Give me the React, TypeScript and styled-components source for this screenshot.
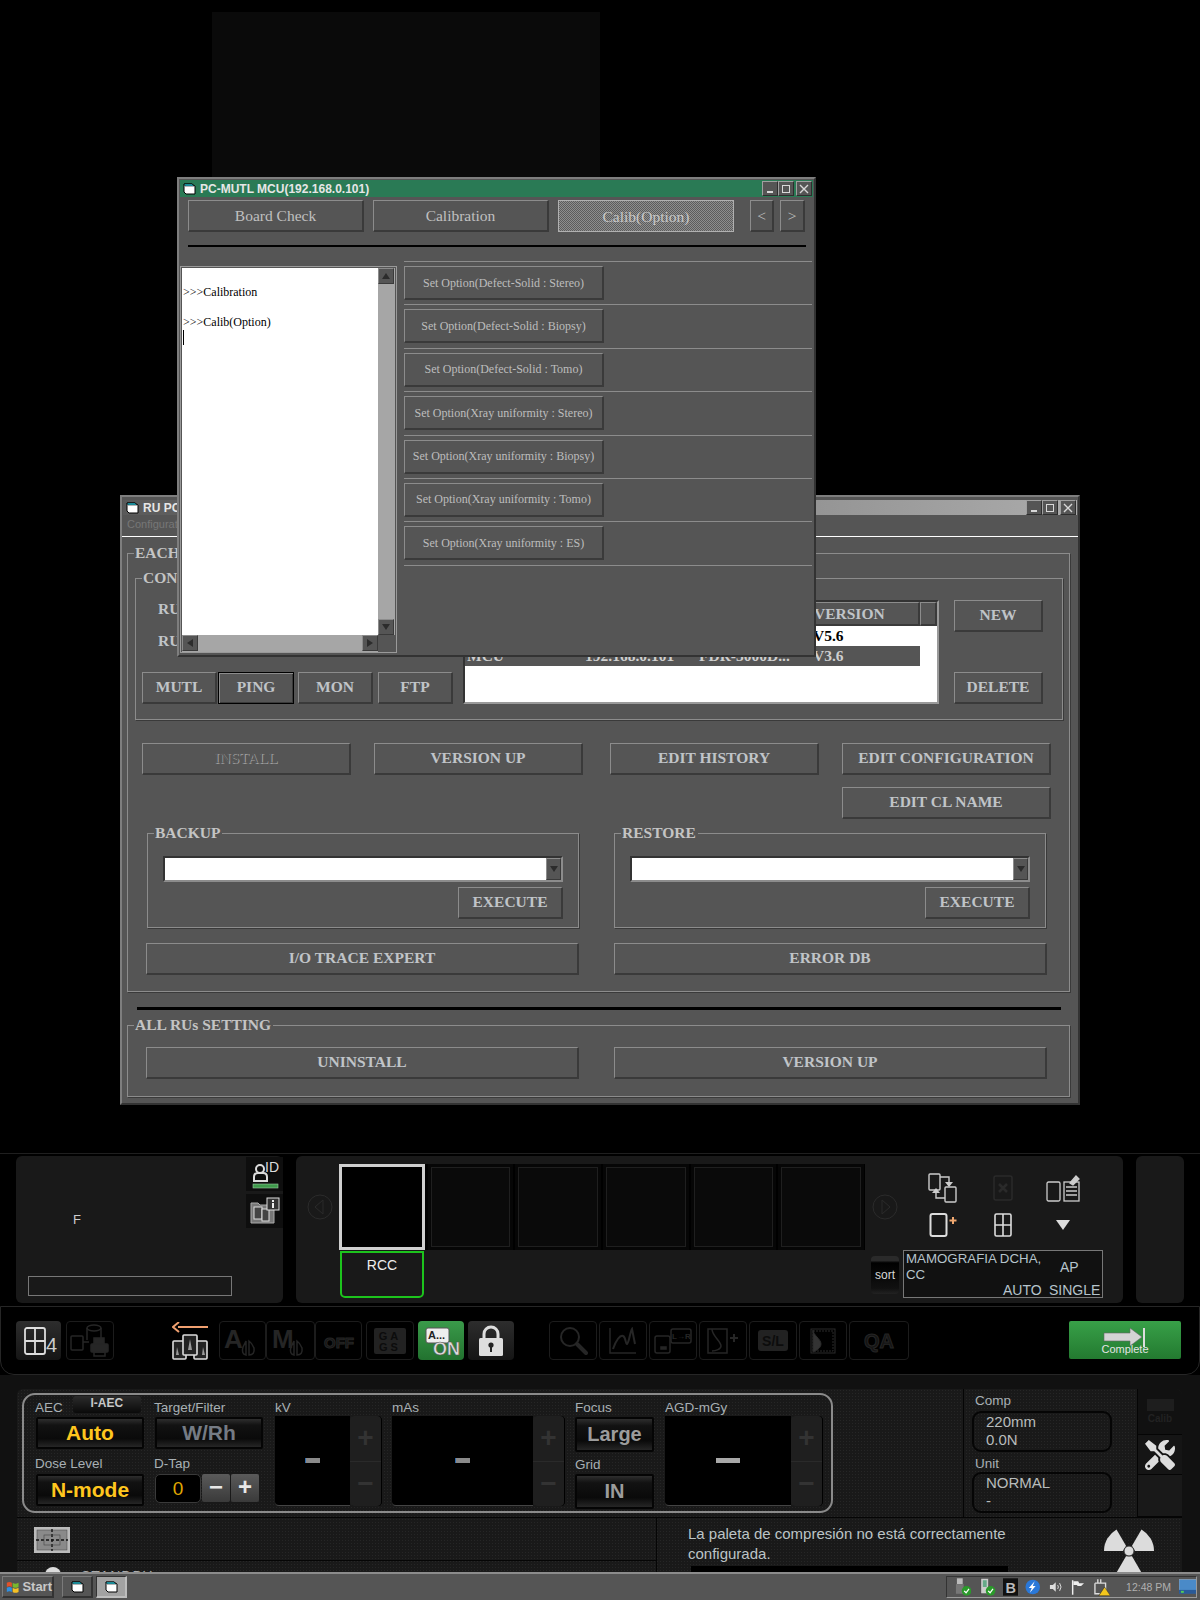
import * as React from 'react';
import styled, { createGlobalStyle, css } from 'styled-components';
import { FaTools } from 'react-icons/fa';

const GlobalStyle = createGlobalStyle`
  html, body { margin: 0; padding: 0; background: #000; }
  * { box-sizing: border-box; }
`;

const serif = `"Liberation Serif", "Times New Roman", serif`;
const sans = `"Liberation Sans", Arial, sans-serif`;

const bevel = css`
  background-color: #555;
  border-style: solid;
  border-width: 1px 2px 2px 1px;
  border-color: #8c8c8c #3a3a3a #3a3a3a #8c8c8c;
`;

const Page = styled.div`
  width: 1200px;
  height: 1600px;
  background: #000;
  display: flex;
  flex-direction: column;
  overflow: hidden;
  font-family: ${sans};
`;

/* ---------- desktop with the two floating windows ---------- */
const Desktop = styled.div`
  height: 1153px;
  flex: none;
  position: relative;
`;
const GhostWindow = styled.div`
  position: absolute;
  left: 212px;
  top: 12px;
  width: 388px;
  height: 170px;
  background: #0a0a0a;
`;
const Win = styled.div<{ $x: number; $y: number; $w: number; $h: number }>`
  position: absolute;
  left: ${({ $x }) => $x}px;
  top: ${({ $y }) => $y}px;
  width: ${({ $w }) => $w}px;
  height: ${({ $h }) => $h}px;
  background: #555;
  border: 2px solid;
  border-color: #7e7e7e #333 #333 #7e7e7e;
  display: flex;
  flex-direction: column;
`;
const TitleBar = styled.div<{ $active?: boolean }>`
  height: ${({ $active }) => ($active ? 17 : 15)}px;
  flex: none;
  margin: ${({ $active }) => ($active ? 1 : 3)}px 1px 0 1px;
  padding: 0 1px 0 3px;
  display: flex;
  align-items: center;
  gap: 4px;
  background: ${({ $active }) => ($active ? '#2a7a55' : 'linear-gradient(90deg, #5a5a5a, #ababab)')};
`;
const TitleText = styled.span`
  font: bold 12px ${sans};
  color: #e6e6e6;
  white-space: nowrap;
  flex: 1;
`;
const CaptionBtn = styled.span<{ $gap?: boolean }>`
  width: 16px;
  height: 15px;
  ${bevel};
  border-width: 1px;
  border-color: #a0a0a0 #2e2e2e #2e2e2e #a0a0a0;
  display: flex;
  align-items: center;
  justify-content: center;
  ${({ $gap }) => $gap && 'margin-left: 2px;'}
`;
const CaptionGroup = styled.div`
  display: flex;
`;

const TabRow = styled.div`
  display: flex;
  gap: 9px;
  margin: 3px 0 0 9px;
`;
const Tab = styled.div<{ $on?: boolean; $w?: number }>`
  width: ${({ $w }) => $w ?? 176}px;
  height: 32px;
  ${bevel};
  font: 15.5px ${serif};
  color: #c0c0c0;
  display: flex;
  align-items: center;
  justify-content: center;
  ${({ $on }) =>
    $on &&
    css`
      border: 1px solid #b0b0b0;
      color: #c8c8c8;
      padding-top: 1px;
      background: repeating-conic-gradient(#8e8e8e 0 25%, #5c5c5c 0 50%) 0 0 / 2px 2px;
    `}
`;
const ArrowTabs = styled.div`
  display: flex;
  gap: 6px;
  margin-left: 7px;
`;
const Rule = styled.div`
  height: 2px;
  margin: 13px 8px 0 9px;
  background: #000;
`;
const McuBody = styled.div`
  display: flex;
  margin-top: 14px;
`;
const LogFrame = styled.div`
  margin: 5px 0 0 1px;
  width: 217px;
  height: 387px;
  border: 1px solid #9a9a9a;
  padding: 1px;
  display: grid;
  grid-template-columns: 196px 17px;
  grid-template-rows: 367px 17px;
`;
const LogText = styled.div`
  background: #fff;
  padding: 2px 0 0 1px;
  font: 12px/15px ${serif};
  color: #000;
  white-space: pre;
`;
const Caret = styled.div`
  width: 1px;
  height: 15px;
  background: #000;
`;
const ScrollTrack = styled.div<{ $row?: boolean }>`
  background: #a6a6a6;
  display: flex;
  flex-direction: ${({ $row }) => ($row ? 'row' : 'column')};
  justify-content: space-between;
`;
const ScrollBtn = styled.span`
  width: 16px;
  height: 16px;
  flex: none;
  ${bevel};
  border-width: 1px;
  display: flex;
  align-items: center;
  justify-content: center;
`;
const OptionList = styled.div`
  width: 408px;
  margin-left: 7px;
  border-bottom: 1px solid #8c8c8c;
  height: 305px;
`;
const OptionRow = styled.div`
  height: 43.4px;
  border-top: 1px solid #8c8c8c;
  padding-top: 4px;
`;
const OptionBtn = styled.div`
  width: 200px;
  height: 34px;
  ${bevel};
  padding-top: 1px;
  font: 12px ${serif};
  color: #bdbdbd;
  display: flex;
  align-items: center;
  justify-content: center;
  white-space: nowrap;
`;

/* ---------- RU window ---------- */
const MenuBar = styled.div`
  height: 21px;
  flex: none;
  padding: 3px 0 0 5px;
  font: 11px ${sans};
  color: #777;
`;
const WhiteRule = styled.div`
  height: 1px;
  flex: none;
  background: #fff;
`;
const Group = styled.div<{ $ml: number; $mt: number; $h: number; $w: number }>`
  position: relative;
  margin: ${({ $mt }) => $mt}px 0 0 ${({ $ml }) => $ml}px;
  height: ${({ $h }) => $h}px;
  width: ${({ $w }) => $w}px;
  flex: none;
  border: 1px solid #8c8c8c;
  box-shadow: 1px 1px 0 #3a3a3a;
`;
const Legend = styled.span`
  position: absolute;
  left: 6px;
  top: -11px;
  padding: 0 2px 0 1px;
  background: #555;
  font: bold 15.5px/20px ${serif};
  color: #c4c4c4;
  white-space: nowrap;
`;
const BoldBtn = styled.div<{ $w: number; $ml?: number; $dead?: boolean; $focus?: boolean }>`
  width: ${({ $w }) => $w}px;
  height: 32px;
  flex: none;
  margin-left: ${({ $ml }) => $ml ?? 0}px;
  ${bevel};
  padding-bottom: 2px;
  font: bold 15.5px ${serif};
  color: #c0c4c8;
  display: flex;
  align-items: center;
  justify-content: center;
  white-space: nowrap;
  ${({ $dead }) => $dead && 'color: #585858; text-shadow: 1px 1px 0 #a0a0a0; font-weight: normal;'}
  ${({ $focus }) => $focus && 'border: 1px solid #000; box-shadow: inset 1px 1px 0 #8c8c8c, inset -1px -1px 0 #3a3a3a;'}
`;
const ConBody = styled.div`
  height: 100%;
  padding: 0 20px 15px 6px;
  display: flex;
  align-items: flex-end;
`;
const ConLeft = styled.div`
  width: 311px;
  flex: none;
`;
const RuLabel = styled.div`
  font: bold 15.5px/32px ${serif};
  color: #c0c4c8;
  padding-left: 16px;
`;
const RuButtons = styled.div`
  display: flex;
  margin-top: 15px;
`;
const ListBox = styled.div`
  width: 476px;
  height: 104px;
  margin-left: 10px;
  background: #fff;
  border: 2px solid;
  border-color: #333 #9a9a9a #9a9a9a #333;
  display: flex;
  flex-direction: column;
`;
const ListHead = styled.div`
  display: grid;
  grid-template-columns: 118px 114px 114px 109px 17px;
  height: 24px;
  flex: none;
`;
const HeadCell = styled.div`
  ${bevel};
  font: bold 15.5px/21px ${serif};
  color: #c0c4c8;
  padding-left: 2px;
  overflow: hidden;
`;
const ListRow = styled.div<{ $sel?: boolean }>`
  display: grid;
  grid-template-columns: 118px 114px 114px 109px;
  width: 455px;
  height: 20px;
  flex: none;
  font: bold 15.5px/20px ${serif};
  color: ${({ $sel }) => ($sel ? '#cfcfcf' : '#000')};
  background: ${({ $sel }) => ($sel ? '#555' : 'transparent')};
  white-space: nowrap;
  & > span { padding-left: 2px; overflow: hidden; }
`;
const ConSide = styled.div`
  height: 104px;
  margin-left: 15px;
  display: flex;
  flex-direction: column;
  justify-content: space-between;
`;
const ActionGrid = styled.div`
  margin: 23px 0 0 14px;
  display: grid;
  grid-template-columns: 232px 236px 232px 209px;
  row-gap: 12px;
`;
const SecondLine = styled.div`
  grid-column: 4;
`;
const TwoCols = styled.div<{ $mt: number; $ml: number }>`
  display: flex;
  gap: 35px;
  margin: ${({ $mt }) => $mt}px 0 0 ${({ $ml }) => $ml}px;
`;
const GroupBox = styled.div`
  position: relative;
  width: 432px;
  height: 95px;
  border: 1px solid #8c8c8c;
  box-shadow: 1px 1px 0 #3a3a3a;
  padding: 22px 15px 0 15px;
  display: flex;
  flex-direction: column;
  align-items: flex-end;
`;
const Combo = styled.div`
  width: 400px;
  height: 26px;
  flex: none;
  background: #fff;
  border: 2px solid;
  border-color: #333 #8c8c8c #8c8c8c #333;
  display: flex;
  justify-content: flex-end;
`;
const ComboBtn = styled.span`
  width: 15px;
  ${bevel};
  border-width: 1px;
  display: flex;
  align-items: center;
  justify-content: center;
`;
const ExecuteWrap = styled.div`
  margin-top: 5px;
`;
const ThickRule = styled.div`
  height: 3px;
  margin: 15px 17px 0 15px;
  background: #000;
  flex: none;
`;

/* ---------- thumbnails strip ---------- */
const StripSection = styled.div`
  height: 153px;
  flex: none;
  border-top: 1px solid #1f1f1f;
  padding: 2px 0 0 16px;
  display: flex;
`;
const Panel = styled.div<{ $w: number; $ml?: number }>`
  width: ${({ $w }) => $w}px;
  height: 147px;
  margin-left: ${({ $ml }) => $ml ?? 0}px;
  background: #191919;
  border-radius: 6px;
`;
const PatientPanel = styled(Panel)`
  display: flex;
`;
const PatientInfo = styled.div`
  flex: 1;
  display: flex;
  flex-direction: column;
  padding: 57px 0 7px 12px;
`;
const PatientSex = styled.div`
  font: 13px/14px ${sans};
  color: #ccc;
  margin-left: 45px;
`;
const PatientBar = styled.div`
  margin-top: auto;
  width: 204px;
  height: 20px;
  border: 1px solid #777;
`;
const SideTools = styled.div`
  width: 37px;
  display: flex;
  flex-direction: column;
  gap: 3px;
  padding-top: 1px;
`;
const SideTool = styled.div`
  height: 34px;
  background: #0e0e0e;
  display: flex;
  align-items: center;
  justify-content: center;
`;
const StudyPanel = styled(Panel)`
  display: flex;
  flex-direction: column;
  padding-top: 8px;
`;
const ThumbRow = styled.div`
  display: flex;
  height: 86px;
  flex: none;
`;
const NavCell = styled.div<{ $w: number }>`
  width: ${({ $w }) => $w}px;
  display: flex;
  align-items: center;
  justify-content: center;
`;
const Thumbs = styled.div`
  width: 526px;
  margin-left: -4px;
  background: #000;
  display: grid;
  grid-template-columns: repeat(6, 1fr);
`;
const Thumb = styled.div<{ $on?: boolean }>`
  ${({ $on }) =>
    $on
      ? 'border: 3px solid #cfcfcf; background: #000; margin-right: 2px;'
      : 'margin: 0 1px; background: #0a0a0a; box-shadow: inset 0 0 0 3px #060606, inset 0 0 0 4px #1f1f1f;'}
`;
const ToolGrid = styled.div`
  margin: 5px 0 0 8px;
  display: grid;
  grid-template-columns: repeat(3, 60px);
  grid-auto-rows: 37px;
  align-items: center;
  justify-items: center;
`;
const StudyRow = styled.div`
  display: flex;
  padding-left: 44px;
  align-items: flex-start;
`;
const ViewTag = styled.div`
  width: 84px;
  height: 47px;
  margin-top: 1px;
  border: 2px solid #1dc41d;
  border-radius: 0 0 5px 5px;
  font: 14px/16px ${sans};
  color: #eee;
  text-align: center;
  padding-top: 4px;
`;
const SortBtn = styled.div`
  width: 28px;
  height: 38px;
  margin: 6px 0 0 447px;
  border-radius: 4px;
  background: linear-gradient(#2a2a2a 0, #2a2a2a 12%, #000 18%, #111 85%, #222 100%);
  font: 12px/38px ${sans};
  color: #d8d8d8;
  text-align: center;
`;
const ProcInfo = styled.div`
  width: 200px;
  height: 48px;
  margin-left: 4px;
  padding-left: 2px;
  border: 1px solid #777;
  background: #111;
  font: 14px/16px ${sans};
  color: #b6c4cc;
  display: grid;
  grid-template-columns: 97px 46px 1fr;
  grid-template-rows: 31px 15px;
  white-space: nowrap;
`;
const ProcName = styled.div`
  grid-column: 1 / span 2;
  font-size: 13.3px;
`;
const ProcCell = styled.div<{ $pl?: number; $col?: number; $mt?: number }>`
  ${({ $col }) => $col && `grid-column: ${$col};`}
  padding-left: ${({ $pl }) => $pl ?? 0}px;
  margin-top: ${({ $mt }) => $mt ?? 0}px;
`;

/* ---------- toolbar ---------- */
const Toolbar = styled.div`
  height: 69px;
  flex: none;
  border: 1px solid #262626;
  border-radius: 0 0 14px 14px;
  padding: 14px 18px 0 15px;
  display: flex;
  align-items: flex-start;
`;
const ToolSet = styled.div<{ $ml?: number; $gap?: number }>`
  display: flex;
  margin-left: ${({ $ml }) => $ml ?? 0}px;
  gap: ${({ $gap }) => $gap ?? 0}px;
`;
const ToolBtn = styled.div<{ $w?: number; $kind?: 'dim' | 'dark' | 'green' | 'bare' }>`
  width: ${({ $w }) => $w ?? 48}px;
  height: 39px;
  border-radius: 4px;
  display: flex;
  align-items: center;
  justify-content: center;
  ${({ $kind }) => {
    if ($kind === 'dark') return 'background: linear-gradient(#2d2d2d, #151515);';
    if ($kind === 'green') return 'background: linear-gradient(#3a9a4a, #22722f);';
    if ($kind === 'bare') return '';
    return 'border: 1px solid #1c1c1c;';
  }}
`;
const CompleteBtn = styled.div`
  width: 112px;
  height: 38px;
  margin-left: auto;
  border-radius: 2px;
  background: linear-gradient(#38a048, #237a30);
  display: flex;
  flex-direction: column;
  align-items: center;
  padding-top: 6px;
`;
const CompleteLabel = styled.span`
  font: 11px/12px ${sans};
  color: #e4e4e4;
  margin-top: -6px;
`;

/* ---------- exposure panel ---------- */
const ExposureSection = styled.div`
  height: 197px;
  flex: none;
  background: #111;
  padding: 14px 18px 0 17px;
`;
const ExposurePanel = styled.div`
  height: 183px;
  overflow: hidden;
  border-radius: 6px 6px 0 0;
  background-color: #191919;
  background-image: radial-gradient(#262626 0.8px, transparent 0.8px);
  background-size: 3px 3px;
`;
const UpperRow = styled.div`
  height: 129px;
  display: flex;
  border-bottom: 1px solid #050505;
`;
const ParamGroup = styled.div`
  width: 811px;
  height: 120px;
  flex: none;
  margin: 4px 0 0 5px;
  border: 2px solid #8a8a8a;
  border-radius: 13px;
  padding-left: 12px;
  display: flex;
  gap: 11px;
`;
const ParamCol = styled.div<{ $w: number; $ml?: number }>`
  width: ${({ $w }) => $w}px;
  margin-left: ${({ $ml }) => $ml ?? 0}px;
  flex: none;
`;
const ParamLabel = styled.div<{ $h?: number }>`
  height: ${({ $h }) => $h ?? 22}px;
  font: 13.5px/${({ $h }) => ($h ?? 22) + 4}px ${sans};
  color: #a8b0b4;
  display: flex;
  align-items: flex-start;
  white-space: nowrap;
`;
const LeadLabel = styled(ParamLabel)`
  margin-left: -1px;
`;
const TinyBtn = styled.span`
  width: 68px;
  height: 17px;
  margin: 1px 0 0 10px;
  border-radius: 3px;
  background: linear-gradient(#2c2c2c, #0a0a0a);
  font: bold 12px/15px ${sans};
  color: #c8c8c8;
  text-align: center;
`;
const SelectBtn = styled.div<{ $tone: 'gold' | 'grey' | 'light'; $h?: number }>`
  height: ${({ $h }) => $h ?? 32}px;
  border: 2px solid #050505;
  border-radius: 2px;
  background: linear-gradient(#2e2e2e 0, #121212 22%, #0a0a0a 70%, #262626 100%);
  font: bold ${({ $tone }) => ($tone === 'light' ? 20 : 21)}px/${({ $h }) => ($h ?? 32) - 5}px ${sans};
  text-align: center;
  color: ${({ $tone }) => ($tone === 'gold' ? '#ffc61e' : $tone === 'grey' ? '#757b84' : '#9c9c9c')};
`;
const TapRow = styled.div`
  display: flex;
  gap: 1px;
`;
const TapValue = styled.div`
  width: 46px;
  height: 29px;
  background: #000;
  border: 1px solid #3a3a3a;
  border-radius: 5px;
  font: 19px/27px ${sans};
  color: #e0a800;
  text-align: center;
`;
const TapBtn = styled.div`
  width: 28px;
  height: 28px;
  border-radius: 2px;
  background: linear-gradient(#5a5a5a, #3a3a3a);
  font: bold 24px/26px ${sans};
  color: #e8e8e8;
  text-align: center;
`;
const Display = styled.div`
  display: flex;
  height: 90px;
  margin-top: -1px;
`;
const DisplayFace = styled.div`
  flex: 1;
  background: #000;
  border-bottom: 1px solid #444;
  border-radius: 0 0 0 4px;
  display: flex;
  align-items: center;
  justify-content: center;
`;
const Dash = styled.span<{ $w: number; $big?: boolean }>`
  width: ${({ $w }) => $w}px;
  height: 5px;
  background: ${({ $big }) => ($big ? '#a8a8a8' : '#8a8a8a')};
  ${({ $big }) => !$big && 'border-left: 1px solid #2a6ab0;'}
`;
const Stepper = styled.div`
  width: 31px;
  border-radius: 4px;
  background: #1f1f1f;
  display: grid;
  grid-template-rows: 1fr 1fr;
  box-shadow: 1px 0 0 #000;
`;
const StepCell = styled.div`
  font: bold 28px/44px ${sans};
  color: #333;
  text-align: center;
  & + & { border-top: 1px solid #2a2a2a; }
`;
const CompCol = styled.div`
  width: 174px;
  flex: none;
  margin-left: 130px;
  border-left: 1px solid #050505;
  padding: 0 0 0 8px;
`;
const CompLabel = styled.div<{ $h: number }>`
  height: ${({ $h }) => $h}px;
  padding-left: 3px;
  font: 13.5px/24px ${sans};
  color: #a8b0b4;
`;
const CompBox = styled.div`
  width: 140px;
  height: 41px;
  border: 2px solid #050505;
  border-radius: 9px;
  padding: 0 0 0 12px;
  font: 15px/18px ${sans};
  color: #b8bcbc;
`;
const SideCells = styled.div`
  width: 45px;
  display: flex;
  flex-direction: column;
`;
const SideCell = styled.div<{ $h: number; $bg?: string }>`
  height: ${({ $h }) => $h}px;
  border-bottom: 1px solid #050505;
  border-left: 1px solid #050505;
  background: ${({ $bg }) => $bg ?? '#171717'};
  display: flex;
  flex-direction: column;
  align-items: center;
  justify-content: center;
  color: #ddd;
`;
const CalibLamp = styled.span`
  width: 27px;
  height: 12px;
  background: #1e1e1e;
`;
const CalibText = styled.span`
  font: bold 10px/12px ${sans};
  color: #222;
  margin-top: 2px;
`;
const LowerRow = styled.div`
  display: flex;
  height: 54px;
`;
const LowerLeft = styled.div`
  width: 640px;
  flex: none;
  border-right: 1px solid #050505;
`;
const FrameCell = styled.div`
  height: 43px;
  padding: 9px 0 0 17px;
  border-bottom: 1px solid #050505;
`;
const StatusLine = styled.div`
  display: flex;
  align-items: flex-start;
  padding: 6px 0 0 28px;
  gap: 20px;
`;
const StatusDot = styled.span`
  width: 16px;
  height: 16px;
  border-radius: 50%;
  background: #ddd;
`;
const StatusText = styled.span`
  margin-top: 2px;
  font: 14px/14px ${sans};
  color: #aaa;
  letter-spacing: 1px;
`;
const LowerRight = styled.div`
  flex: 1;
  display: flex;
  padding-left: 31px;
`;
const Message = styled.div`
  width: 370px;
  padding-top: 6px;
  font: 15px/20px ${sans};
  color: #bcc4c6;
`;
const MessageBar = styled.div`
  width: 317px;
  height: 8px;
  margin: 2px 0 0 3px;
  background: #000;
`;
const Trefoil = styled.div`
  margin: 9px 0 0 45px;
`;

/* ---------- taskbar ---------- */
const Taskbar = styled.div`
  height: 28px;
  flex: none;
  background: #555;
  border-top: 2px solid #8c8c8c;
  padding: 2px 3px 0 2px;
  display: flex;
  align-items: flex-start;
`;
const StartBtn = styled.div`
  width: 52px;
  height: 22px;
  ${bevel};
  border-color: #7a7a7a #333 #333 #7a7a7a;
  display: flex;
  align-items: center;
  padding-left: 3px;
  gap: 3px;
  font: bold 13px ${sans};
  color: #c8c8c8;
`;
const TaskBtn = styled.div<{ $on?: boolean; $ml: number }>`
  width: 31px;
  height: 22px;
  margin-left: ${({ $ml }) => $ml}px;
  ${bevel};
  border-color: #7a7a7a #333 #333 #7a7a7a;
  display: flex;
  align-items: center;
  padding-left: 8px;
  ${({ $on }) => $on && 'background: #a2a2a2; border-color: #333 #bdbdbd #bdbdbd #333;'}
`;
const Tray = styled.div`
  width: 251px;
  height: 22px;
  margin-left: auto;
  border: 1px solid;
  border-color: #333 #9a9a9a #9a9a9a #333;
  padding-left: 7px;
  display: flex;
  align-items: center;
  gap: 7px;
`;
const Clock = styled.span`
  margin-left: 9px;
  font: 10.5px ${sans};
  color: #b0b0b0;
  white-space: nowrap;
  width: 47px;
`;

/* ---------- drawn glyphs ---------- */
const DocIcon = () => (
  <svg width="13" height="13" viewBox="0 0 13 13">
    <path d="M1 2h8l3 2v8H3L1 10z" fill="#fff" stroke="#000" />
    <path d="M1 2h8l2 2H2z" fill="#27c5d8" stroke="#000" strokeWidth="0.6" />
  </svg>
);
const MinGlyph = () => (
  <svg width="10" height="10"><rect x="2" y="7" width="6" height="2" fill="#d8d8d8" /></svg>
);
const MaxGlyph = () => (
  <svg width="10" height="10"><rect x="1.5" y="1.5" width="7" height="7" fill="none" stroke="#d8d8d8" /></svg>
);
const CloseGlyph = () => (
  <svg width="10" height="10"><path d="M1 1l8 8M9 1l-8 8" stroke="#d8d8d8" strokeWidth="1.4" /></svg>
);
const Caption = () => (
  <CaptionGroup>
    <CaptionBtn><MinGlyph /></CaptionBtn>
    <CaptionBtn><MaxGlyph /></CaptionBtn>
    <CaptionBtn $gap><CloseGlyph /></CaptionBtn>
  </CaptionGroup>
);
const Tri = ({ dir }: { dir: 'up' | 'down' | 'left' | 'right' }) => {
  const pts = { up: '4,1 8,7 0,7', down: '0,1 8,1 4,7', left: '7,0 7,8 1,4', right: '1,0 1,8 7,4' }[dir];
  return (
    <svg width="8" height="8"><polygon points={pts} fill="#2c2c2c" /></svg>
  );
};
const NavCircle = ({ right }: { right?: boolean }) => (
  <svg width="26" height="26" viewBox="0 0 26 26">
    <circle cx="13" cy="13" r="12" fill="none" stroke="#2b2b2b" />
    <polygon points={right ? '10,6 18,13 10,20' : '16,6 8,13 16,20'} fill="none" stroke="#2b2b2b" />
  </svg>
);
const PatientIdIcon = () => (
  <svg width="30" height="30" viewBox="0 0 30 30">
    <circle cx="10" cy="10" r="4" fill="none" stroke="#ddd" strokeWidth="2" />
    <path d="M4 22v-4q0-4 4-4h5q4 0 4 4v4z" fill="none" stroke="#ddd" strokeWidth="2" />
    <text x="15" y="13" fontSize="14" fontFamily="Liberation Sans" fill="#ddd">ID</text>
    <rect x="3" y="25" width="25" height="4" fill="#3f9a4c" stroke="#9ac8a0" strokeWidth="0.6" />
  </svg>
);
const FolderInfoIcon = () => (
  <svg width="30" height="28" viewBox="0 0 30 28">
    <path d="M1 6h7l2 2h14v18H1z" fill="#777" stroke="#aaa" />
    <rect x="4" y="10" width="8" height="12" fill="#444" stroke="#ddd" />
    <rect x="12" y="12" width="7" height="12" fill="#444" stroke="#ddd" />
    <rect x="17" y="1" width="12" height="12" fill="#333" stroke="#ddd" />
    <rect x="22" y="3" width="2" height="2" fill="#eee" />
    <rect x="22" y="6" width="2" height="5" fill="#eee" />
  </svg>
);
const SwapIcon = () => (
  <svg width="30" height="30" viewBox="0 0 30 30" fill="none" stroke="#ccc" strokeWidth="1.4">
    <rect x="1" y="1" width="11" height="16" rx="1" />
    <rect x="17" y="14" width="11" height="15" rx="1" />
    <path d="M12 4h9v6" />
    <polygon points="17,9 25,9 21,14" fill="#ccc" stroke="none" />
    <path d="M17 25H8v-5" />
    <polygon points="4,20 12,20 8,15" fill="#ccc" stroke="none" />
  </svg>
);
const DeadCardIcon = () => (
  <svg width="20" height="26" viewBox="0 0 20 26" fill="none" stroke="#2a2a2a" strokeWidth="1.5">
    <rect x="1" y="1" width="18" height="24" rx="2" />
    <path d="M6 9l8 8M14 9l-8 8" strokeWidth="2.5" />
  </svg>
);
const EditListIcon = () => (
  <svg width="34" height="28" viewBox="0 0 34 28" fill="none" stroke="#ccc" strokeWidth="1.3">
    <rect x="1" y="8" width="13" height="19" rx="1.5" />
    <rect x="18" y="8" width="15" height="19" />
    <path d="M20 13h11M20 17h11M20 21h11" />
    <path d="M24 9l6-7 3 3-6 6z" fill="#ccc" />
  </svg>
);
const AddPageIcon = () => (
  <svg width="28" height="24" viewBox="0 0 28 24" fill="none">
    <rect x="1.5" y="1" width="16" height="22" rx="2" stroke="#ddd" strokeWidth="2" />
    <path d="M24 4v7M20.5 7.5h7" stroke="#f0a870" strokeWidth="2" />
  </svg>
);
const QuadIcon = () => (
  <svg width="18" height="24" viewBox="0 0 18 24" fill="none" stroke="#ddd" strokeWidth="1.6">
    <rect x="1" y="1" width="16" height="22" rx="1.5" />
    <path d="M9 1v22M1 12h16" />
  </svg>
);
const LayoutFourIcon = () => (
  <svg width="40" height="32" viewBox="0 0 40 32">
    <g fill="none" stroke="#ddd" strokeWidth="1.8">
      <rect x="6" y="3" width="20" height="26" rx="2" />
      <path d="M16 3v26M6 16h20" />
    </g>
    <text x="27" y="27" fontSize="20" fontFamily="Liberation Sans" fill="#ccc">4</text>
  </svg>
);
const PrintFlowIcon = () => (
  <svg width="40" height="34" viewBox="0 0 40 34" fill="none" stroke="#262626" strokeWidth="1.5">
    <rect x="1" y="12" width="12" height="14" rx="1" />
    <ellipse cx="24" cy="4" rx="7" ry="3" />
    <path d="M17 4v12M31 4v12" />
    <path d="M13 18h6" />
    <rect x="24" y="14" width="10" height="6" fill="#262626" />
    <rect x="21" y="20" width="17" height="8" rx="1" fill="#262626" />
    <rect x="24" y="28" width="11" height="4" />
  </svg>
);
const MultiViewIcon = () => (
  <svg width="36" height="38" viewBox="0 0 36 38">
    <path d="M6 5h30" stroke="#f0a070" strokeWidth="2" />
    <path d="M7 0L1 5l6 5" fill="none" stroke="#f0a070" strokeWidth="2" />
    <g fill="#222" stroke="#ddd" strokeWidth="1.6">
      <rect x="1" y="19" width="13" height="18" rx="1" />
      <rect x="22" y="19" width="13" height="18" rx="1" />
      <rect x="11" y="13" width="14" height="20" rx="1" />
    </g>
    <path d="M18 17l-2 11h4zM5 25l-1 8h3zM31 25l-1 8h3z" fill="#999" />
  </svg>
);
const LetterBreastIcon = ({ letter }: { letter: string }) => (
  <svg width="44" height="34" viewBox="0 0 44 34">
    <text x="3" y="24" fontSize="26" fontWeight="bold" fontFamily="Liberation Sans" fill="#252525">{letter}</text>
    <path d="M25 31q-5-1-3-8 2-4 3-6zM28 31q6 0 5-7-2-5-5-7z" fill="none" stroke="#252525" strokeWidth="1.5" />
  </svg>
);
const OutlinedWord = ({ word, size }: { word: string; size: number }) => (
  <svg width="44" height="24" viewBox="0 0 44 24">
    <text x="22" y="19" textAnchor="middle" fontSize={size} fontWeight="bold" fontFamily="Liberation Sans" fill="#141414" stroke="#252525" strokeWidth="1">{word}</text>
  </svg>
);
const GagsIcon = () => (
  <svg width="32" height="26" viewBox="0 0 32 26">
    <rect width="32" height="26" rx="2" fill="#222" />
    <text x="16" y="12" textAnchor="middle" fontSize="11" letterSpacing="3" fontWeight="bold" fontFamily="Liberation Sans" fill="#0c0c0c">GA</text>
    <text x="16" y="23" textAnchor="middle" fontSize="11" letterSpacing="3" fontWeight="bold" fontFamily="Liberation Sans" fill="#0c0c0c">GS</text>
  </svg>
);
const AutoOnIcon = () => (
  <svg width="40" height="38" viewBox="0 0 40 38">
    <rect x="5" y="6" width="23" height="15" rx="2" fill="#eee" stroke="#555" />
    <text x="7" y="17" fontSize="11" fontWeight="bold" fontFamily="Liberation Sans" fill="#222">A...</text>
    <text x="39" y="33" textAnchor="end" fontSize="18" fontFamily="Liberation Sans" fontWeight="bold" fill="#ddd" stroke="#555" strokeWidth="0.5">ON</text>
  </svg>
);
const LockIcon = () => (
  <svg width="28" height="32" viewBox="0 0 28 32">
    <path d="M7 14V9a7 7 0 0 1 14 0v5" fill="none" stroke="#ddd" strokeWidth="3" />
    <rect x="2" y="13" width="24" height="18" rx="1.5" fill="#ddd" />
    <circle cx="14" cy="20" r="2.6" fill="#222" />
    <rect x="13" y="21" width="2" height="6" fill="#222" />
  </svg>
);
const MagnifierIcon = () => (
  <svg width="30" height="30" viewBox="0 0 30 30" fill="none" stroke="#262626">
    <circle cx="12" cy="11" r="9" strokeWidth="2" />
    <path d="M19 18l9 9" strokeWidth="4" strokeLinecap="round" />
  </svg>
);
const CurveIcon = () => (
  <svg width="30" height="28" viewBox="0 0 30 28" fill="none" stroke="#262626" strokeWidth="1.5">
    <path d="M2 1v25h26" />
    <path d="M5 22c3-9 7-14 10-13 3 1 2 7 4 8 2-1 3-12 5-15 1 5 2 10 3 15" strokeWidth="2" />
  </svg>
);
const LrIcon = () => (
  <svg width="38" height="26" viewBox="0 0 38 26" fill="none" stroke="#262626" strokeWidth="1.5">
    <rect x="1" y="8" width="15" height="17" rx="2" />
    <rect x="17" y="1" width="20" height="14" rx="2" />
    <text x="18" y="11" fontSize="8" fontWeight="bold" fontFamily="Liberation Sans" fill="#262626" stroke="none">L→R</text>
    <rect x="7" y="19" width="5" height="2" fill="#262626" />
  </svg>
);
const BreastAddIcon = () => (
  <svg width="32" height="28" viewBox="0 0 32 28" fill="none" stroke="#262626" strokeWidth="1.5">
    <rect x="1" y="2" width="19" height="24" />
    <path d="M5 2c0 7 9 12 9 17 0 3-5 5-9 5" />
    <path d="M27 7v8M23 11h8" strokeWidth="2" />
  </svg>
);
const SlIcon = () => (
  <svg width="30" height="22" viewBox="0 0 30 22">
    <rect width="30" height="21" rx="3" fill="#222" />
    <text x="15" y="16" textAnchor="middle" fontSize="14" fontWeight="bold" fontFamily="Liberation Sans" fill="#0c0c0c">S/L</text>
  </svg>
);
const BreastFrameIcon = () => (
  <svg width="26" height="26" viewBox="0 0 26 26" fill="none" stroke="#2b2b2b">
    <rect x="1" y="1" width="24" height="24" />
    <rect x="3" y="3" width="20" height="20" strokeDasharray="2 1" />
    <path d="M3 2c0 5 8 9 8 14 0 4-5 7-8 8z" fill="#333" />
  </svg>
);
const FrameCenterIcon = () => (
  <svg width="36" height="26" viewBox="0 0 36 26">
    <rect width="36" height="26" fill="#bbb" />
    <rect x="3" y="3" width="30" height="20" fill="#8a8a8a" stroke="#444" strokeWidth="0.5" />
    <path d="M18 2v22M2 13h32" stroke="#111" strokeWidth="1.4" strokeDasharray="3 2" />
    <rect x="10" y="8" width="16" height="10" fill="none" stroke="#444" strokeWidth="0.6" />
  </svg>
);
const CompleteArrow = () => (
  <svg width="44" height="22" viewBox="0 0 44 22">
    <path d="M1 6h26V1l12 9-12 9v-5H1z" fill="#d4d4d4" stroke="#666" strokeWidth="0.6" />
    <rect x="40" y="1" width="2" height="19" fill="#ddd" />
  </svg>
);
const RadiationIcon = () => (
  <svg width="52" height="52" viewBox="-26 -24 52 52" fill="#dcdcdc">
    <path d="M3-5.2L12.5-21.6A25 25 0 0 1 25 0H6z" />
    <path d="M-3-5.2L-12.5-21.6A25 25 0 0 0 -25 0H-6z" />
    <path d="M3 5.2L12.5 21.6A25 25 0 0 1 -12.5 21.6L-3 5.2z" />
    <circle r="5" fill="#dcdcdc" stroke="#333" />
  </svg>
);
const WinFlag = () => (
  <svg width="16" height="16" viewBox="0 0 16 16">
    <path d="M1 3q3-2 6 0v5q-3-2-6 0z" fill="#e0512a" />
    <path d="M8 3q3 2 7 0v5q-4 2-7 0z" fill="#7ab82c" />
    <path d="M1 9q3-2 6 0v5q-3-2-6 0z" fill="#2f8fe0" />
    <path d="M8 9q3 2 7 0v5q-4 2-7 0z" fill="#f4c025" />
  </svg>
);
const Badge = ({ warn }: { warn?: boolean }) =>
  warn ? (
    <polygon points="12,9 18,18 6,18" fill="#f3c61c" stroke="#222" strokeWidth="0.5" />
  ) : (
    <g>
      <circle cx="13" cy="13" r="5" fill="#2a9a2a" />
      <path d="M10.5 13l2 2 3-4" fill="none" stroke="#fff" strokeWidth="1.3" />
    </g>
  );
const TrayUsb = () => (
  <svg width="18" height="18" viewBox="0 0 18 18">
    <rect x="3" y="0" width="6" height="6" fill="#bbb" />
    <rect x="2" y="6" width="8" height="10" fill="#777" />
    <Badge />
  </svg>
);
const TrayDoc = () => (
  <svg width="18" height="18" viewBox="0 0 18 18">
    <rect x="3" y="0" width="8" height="16" fill="#ccc" stroke="#333" strokeWidth="0.5" />
    <rect x="5" y="2" width="4" height="7" fill="#6a8" />
    <Badge />
  </svg>
);
const TrayB = () => (
  <svg width="16" height="18" viewBox="0 0 16 18">
    <rect width="16" height="18" fill="#111" />
    <text x="8" y="15" textAnchor="middle" fontSize="15" fontWeight="bold" fontFamily="Liberation Sans" fill="#bbb">B</text>
  </svg>
);
const TrayBolt = () => (
  <svg width="16" height="16" viewBox="0 0 16 16">
    <circle cx="8" cy="8" r="7.5" fill="#2a78d8" />
    <path d="M10 2L4 9h3l-2 5 6-7H8z" fill="#fff" />
  </svg>
);
const TraySpeaker = () => (
  <svg width="16" height="16" viewBox="0 0 16 16" fill="none" stroke="#ddd">
    <polygon points="2,6 5,6 8,3 8,13 5,10 2,10" fill="#ddd" stroke="none" />
    <path d="M10 6q1.5 2 0 4M12 4q3 4 0 8" />
  </svg>
);
const TrayFlag = () => (
  <svg width="16" height="16" viewBox="0 0 16 16">
    <rect x="2" y="1" width="1.5" height="15" fill="#eee" />
    <path d="M3.5 2h5l1 2h5l-3 3H8L7 6H3.5z" fill="#eee" />
  </svg>
);
const TrayNet = () => (
  <svg width="18" height="18" viewBox="0 0 18 18" fill="none" stroke="#ddd">
    <path d="M2 5h11v11M5 1v4M8 1v4" strokeWidth="1.4" />
    <path d="M2 5v11h5" strokeWidth="1.4" />
    <Badge warn />
  </svg>
);
const TrayDesktop = () => (
  <svg width="18" height="16" viewBox="0 0 18 16">
    <rect width="18" height="14" fill="#4a8ac8" stroke="#9ab" strokeWidth="0.7" />
    <rect y="11" width="18" height="4" fill="#2a5a98" />
    <rect x="2" y="12" width="3" height="2" fill="#5c5" />
  </svg>
);

const optionLabels = [
  'Set Option(Defect-Solid : Stereo)',
  'Set Option(Defect-Solid : Biopsy)',
  'Set Option(Defect-Solid : Tomo)',
  'Set Option(Xray uniformity : Stereo)',
  'Set Option(Xray uniformity : Biopsy)',
  'Set Option(Xray uniformity : Tomo)',
  'Set Option(Xray uniformity : ES)',
];

const StepperColumn = () => (
  <Stepper>
    <StepCell>+</StepCell>
    <StepCell>−</StepCell>
  </Stepper>
);

function App() {
  return (
    <Page>
      <GlobalStyle />
      <Desktop>
        <GhostWindow />
        <Win $x={120} $y={495} $w={960} $h={610}>
          <TitleBar>
            <DocIcon />
            <TitleText>RU PC</TitleText>
            <Caption />
          </TitleBar>
          <MenuBar>Configuration</MenuBar>
          <WhiteRule />
          <Group $ml={5} $mt={16} $h={439} $w={943}>
            <Legend>EACH RU SETTING</Legend>
            <Group $ml={7} $mt={24} $h={142} $w={928}>
              <Legend>CONNECTION</Legend>
              <ConBody>
                <ConLeft>
                  <RuLabel>RU NAME</RuLabel>
                  <RuLabel>RU IP</RuLabel>
                  <RuButtons>
                    <BoldBtn $w={75}>MUTL</BoldBtn>
                    <BoldBtn $w={76} $ml={1} $focus>PING</BoldBtn>
                    <BoldBtn $w={75} $ml={4}>MON</BoldBtn>
                    <BoldBtn $w={75} $ml={5}>FTP</BoldBtn>
                  </RuButtons>
                </ConLeft>
                <ListBox>
                  <ListHead>
                    <HeadCell>RU</HeadCell>
                    <HeadCell>IP</HeadCell>
                    <HeadCell>MODEL</HeadCell>
                    <HeadCell>VERSION</HeadCell>
                    <HeadCell />
                  </ListHead>
                  <ListRow>
                    <span>CPU</span>
                    <span>192.168.0.100</span>
                    <span>FDR-3000D...</span>
                    <span>V5.6</span>
                  </ListRow>
                  <ListRow $sel>
                    <span>MCU</span>
                    <span>192.168.0.101</span>
                    <span>FDR-3000D...</span>
                    <span>V3.6</span>
                  </ListRow>
                </ListBox>
                <ConSide>
                  <BoldBtn $w={89}>NEW</BoldBtn>
                  <BoldBtn $w={89}>DELETE</BoldBtn>
                </ConSide>
              </ConBody>
            </Group>
            <ActionGrid>
              <BoldBtn $w={209} $dead>INSTALL</BoldBtn>
              <BoldBtn $w={209}>VERSION UP</BoldBtn>
              <BoldBtn $w={209}>EDIT HISTORY</BoldBtn>
              <BoldBtn $w={209}>EDIT CONFIGURATION</BoldBtn>
              <SecondLine>
                <BoldBtn $w={209}>EDIT CL NAME</BoldBtn>
              </SecondLine>
            </ActionGrid>
            <TwoCols $mt={14} $ml={19}>
              <GroupBox>
                <Legend>BACKUP</Legend>
                <Combo><ComboBtn><Tri dir="down" /></ComboBtn></Combo>
                <ExecuteWrap><BoldBtn $w={105}>EXECUTE</BoldBtn></ExecuteWrap>
              </GroupBox>
              <GroupBox>
                <Legend>RESTORE</Legend>
                <Combo><ComboBtn><Tri dir="down" /></ComboBtn></Combo>
                <ExecuteWrap><BoldBtn $w={105}>EXECUTE</BoldBtn></ExecuteWrap>
              </GroupBox>
            </TwoCols>
            <TwoCols $mt={15} $ml={18}>
              <BoldBtn $w={433}>I/O TRACE EXPERT</BoldBtn>
              <BoldBtn $w={433}>ERROR DB</BoldBtn>
            </TwoCols>
          </Group>
          <ThickRule />
          <Group $ml={5} $mt={15} $h={72} $w={943}>
            <Legend>ALL RUs SETTING</Legend>
            <TwoCols $mt={21} $ml={18}>
              <BoldBtn $w={433}>UNINSTALL</BoldBtn>
              <BoldBtn $w={433}>VERSION UP</BoldBtn>
            </TwoCols>
          </Group>
        </Win>

        <Win $x={177} $y={177} $w={639} $h={480}>
          <TitleBar $active>
            <DocIcon />
            <TitleText>PC-MUTL MCU(192.168.0.101)</TitleText>
            <Caption />
          </TitleBar>
          <TabRow>
            <Tab>Board Check</Tab>
            <Tab>Calibration</Tab>
            <Tab $on>Calib(Option)</Tab>
            <ArrowTabs>
              <Tab $w={24}>&lt;</Tab>
              <Tab $w={25}>&gt;</Tab>
            </ArrowTabs>
          </TabRow>
          <Rule />
          <McuBody>
            <LogFrame>
              <LogText>
                {'\n>>>Calibration\n\n>>>Calib(Option)\n'}
                <Caret />
              </LogText>
              <ScrollTrack>
                <ScrollBtn><Tri dir="up" /></ScrollBtn>
                <ScrollBtn><Tri dir="down" /></ScrollBtn>
              </ScrollTrack>
              <ScrollTrack $row>
                <ScrollBtn><Tri dir="left" /></ScrollBtn>
                <ScrollBtn><Tri dir="right" /></ScrollBtn>
              </ScrollTrack>
            </LogFrame>
            <OptionList>
              {optionLabels.map((label) => (
                <OptionRow key={label}>
                  <OptionBtn>{label}</OptionBtn>
                </OptionRow>
              ))}
            </OptionList>
          </McuBody>
        </Win>
      </Desktop>

      <StripSection>
        <PatientPanel $w={267}>
          <PatientInfo>
            <PatientSex>F</PatientSex>
            <PatientBar />
          </PatientInfo>
          <SideTools>
            <SideTool><PatientIdIcon /></SideTool>
            <SideTool><FolderInfoIcon /></SideTool>
          </SideTools>
        </PatientPanel>
        <StudyPanel $w={827} $ml={13}>
          <ThumbRow>
            <NavCell $w={47}><NavCircle /></NavCell>
            <Thumbs>
              <Thumb $on />
              <Thumb />
              <Thumb />
              <Thumb />
              <Thumb />
              <Thumb />
            </Thumbs>
            <NavCell $w={40}><NavCircle right /></NavCell>
            <ToolGrid>
              <SwapIcon />
              <DeadCardIcon />
              <EditListIcon />
              <AddPageIcon />
              <QuadIcon />
              <svg width="14" height="10"><polygon points="0,0 14,0 7,10" fill="#ddd" /></svg>
            </ToolGrid>
          </ThumbRow>
          <StudyRow>
            <ViewTag>RCC</ViewTag>
            <SortBtn>sort</SortBtn>
            <ProcInfo>
              <ProcName>MAMOGRAFIA DCHA,<br />CC</ProcName>
              <ProcCell $pl={11} $mt={8}>AP</ProcCell>
              <ProcCell $col={1} />
              <ProcCell>AUTO</ProcCell>
              <ProcCell>SINGLE</ProcCell>
            </ProcInfo>
          </StudyRow>
        </StudyPanel>
        <Panel $w={48} $ml={13} />
      </StripSection>

      <Toolbar>
        <ToolSet $gap={5}>
          <ToolBtn $w={45} $kind="dark"><LayoutFourIcon /></ToolBtn>
          <ToolBtn><PrintFlowIcon /></ToolBtn>
        </ToolSet>
        <ToolSet $ml={58}>
          <ToolBtn $w={36} $kind="bare"><MultiViewIcon /></ToolBtn>
        </ToolSet>
        <ToolSet $ml={11}>
          <ToolBtn $w={47}><LetterBreastIcon letter="A" /></ToolBtn>
          <ToolBtn $w={49}><LetterBreastIcon letter="M" /></ToolBtn>
          <ToolBtn $w={47}><OutlinedWord word="OFF" size={15} /></ToolBtn>
        </ToolSet>
        <ToolSet $ml={4} $gap={4}>
          <ToolBtn><GagsIcon /></ToolBtn>
          <ToolBtn $w={46} $kind="green"><AutoOnIcon /></ToolBtn>
          <ToolBtn $w={46} $kind="dark"><LockIcon /></ToolBtn>
        </ToolSet>
        <ToolSet $ml={35} $gap={2}>
          <ToolBtn><MagnifierIcon /></ToolBtn>
          <ToolBtn><CurveIcon /></ToolBtn>
          <ToolBtn><LrIcon /></ToolBtn>
          <ToolBtn><BreastAddIcon /></ToolBtn>
          <ToolBtn><SlIcon /></ToolBtn>
          <ToolBtn><BreastFrameIcon /></ToolBtn>
          <ToolBtn $w={60}><OutlinedWord word="QA" size={20} /></ToolBtn>
        </ToolSet>
        <CompleteBtn>
          <CompleteArrow />
          <CompleteLabel>Complete</CompleteLabel>
        </CompleteBtn>
      </Toolbar>

      <ExposureSection>
        <ExposurePanel>
          <UpperRow>
            <ParamGroup>
              <ParamCol $w={108}>
                <LeadLabel>AEC<TinyBtn>I-AEC</TinyBtn></LeadLabel>
                <SelectBtn $tone="gold">Auto</SelectBtn>
                <LeadLabel $h={25}>Dose Level</LeadLabel>
                <SelectBtn $tone="gold">N-mode</SelectBtn>
              </ParamCol>
              <ParamCol $w={108}>
                <LeadLabel>Target/Filter</LeadLabel>
                <SelectBtn $tone="grey">W/Rh</SelectBtn>
                <LeadLabel $h={25}>D-Tap</LeadLabel>
                <TapRow>
                  <TapValue>0</TapValue>
                  <TapBtn>−</TapBtn>
                  <TapBtn>+</TapBtn>
                </TapRow>
              </ParamCol>
              <ParamCol $w={106} $ml={1}>
                <ParamLabel>kV</ParamLabel>
                <Display>
                  <DisplayFace><Dash $w={15} /></DisplayFace>
                  <StepperColumn />
                </Display>
              </ParamCol>
              <ParamCol $w={172}>
                <ParamLabel>mAs</ParamLabel>
                <Display>
                  <DisplayFace><Dash $w={15} /></DisplayFace>
                  <StepperColumn />
                </Display>
              </ParamCol>
              <ParamCol $w={79}>
                <ParamLabel>Focus</ParamLabel>
                <SelectBtn $tone="light" $h={35}>Large</SelectBtn>
                <ParamLabel $h={22}>Grid</ParamLabel>
                <SelectBtn $tone="light" $h={35}>IN</SelectBtn>
              </ParamCol>
              <ParamCol $w={157}>
                <ParamLabel>AGD-mGy</ParamLabel>
                <Display>
                  <DisplayFace><Dash $w={24} $big /></DisplayFace>
                  <StepperColumn />
                </Display>
              </ParamCol>
            </ParamGroup>
            <CompCol>
              <CompLabel $h={22}>Comp</CompLabel>
              <CompBox>220mm<br />0.0N</CompBox>
              <CompLabel $h={20}>Unit</CompLabel>
              <CompBox>NORMAL<br />-</CompBox>
            </CompCol>
            <SideCells>
              <SideCell $h={46} $bg="#111">
                <CalibLamp />
                <CalibText>Calib</CalibText>
              </SideCell>
              <SideCell $h={40} $bg="#151515"><FaTools size={30} /></SideCell>
              <SideCell $h={42} $bg="#191919" />
            </SideCells>
          </UpperRow>
          <LowerRow>
            <LowerLeft>
              <FrameCell><FrameCenterIcon /></FrameCell>
              <StatusLine>
                <StatusDot />
                <StatusText>STANDBY</StatusText>
              </StatusLine>
            </LowerLeft>
            <LowerRight>
              <Message>
                La paleta de compresión no está correctamente configurada.
                <MessageBar />
              </Message>
              <Trefoil><RadiationIcon /></Trefoil>
            </LowerRight>
          </LowerRow>
        </ExposurePanel>
      </ExposureSection>

      <Taskbar>
        <StartBtn><WinFlag />Start</StartBtn>
        <TaskBtn $ml={8}><DocIcon /></TaskBtn>
        <TaskBtn $ml={3} $on><DocIcon /></TaskBtn>
        <Tray>
          <TrayUsb />
          <TrayDoc />
          <TrayB />
          <TrayBolt />
          <TraySpeaker />
          <TrayFlag />
          <TrayNet />
          <Clock>12:48 PM</Clock>
          <TrayDesktop />
        </Tray>
      </Taskbar>
    </Page>
  );
}

export default App;
